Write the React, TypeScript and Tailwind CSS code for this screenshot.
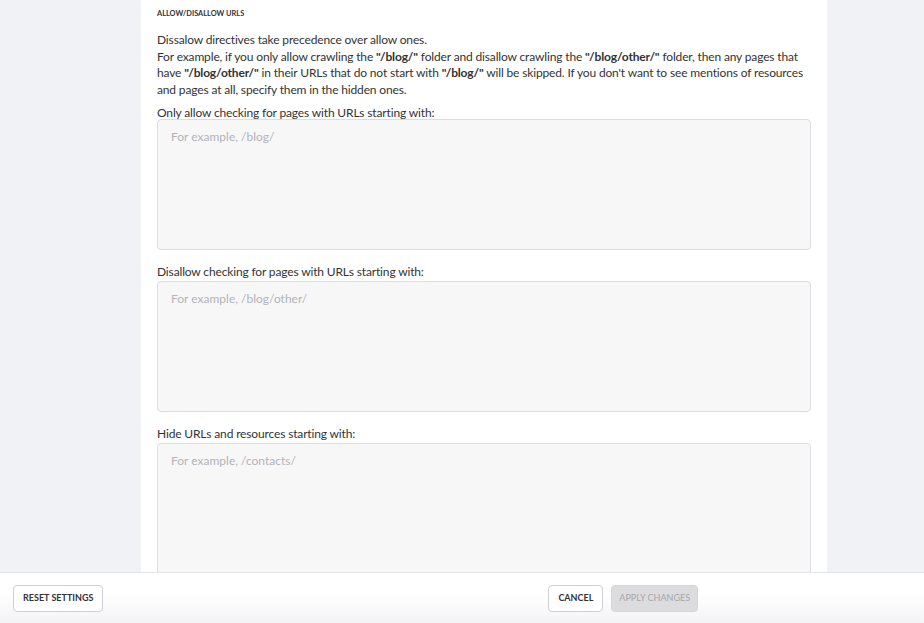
import React from "react";

function Field({ label, placeholder, mt, tmt }: { label: string; placeholder: string; mt: string; tmt: string }) {
  return (
    <div className={mt}>
      <div className="text-[12px] leading-[16px] tracking-[-0.15px] text-[#333]">{label}</div>
      <textarea
        placeholder={placeholder}
        className={`${tmt} block h-[131px] w-full resize-none rounded-[4px] border border-[#dcdde2] bg-[#f7f7f8] px-[13px] py-[9px] text-[12px] leading-[16px] text-[#333] placeholder:text-[#b3b3b8] outline-none`}
      />
    </div>
  );
}

export default function App() {
  return (
    <div
      className="relative h-[623px] w-[924px] overflow-hidden bg-[#f1f2f6]"
      style={{ fontFamily: "Lato, 'Open Sans', sans-serif" }}
    >
      <div className="ml-[141px] h-full w-[686px] bg-white px-[16px] pt-[7px]">
        <div className="text-[7.4px] font-bold uppercase leading-[14px] text-[#333]">
          Allow/Disallow URLs
        </div>
        <p className="mt-[11px] text-[12px] leading-[16.6px] tracking-[-0.15px] text-[#333]">
          Dissalow directives take precedence over allow ones.
          <br />
          For example, if you only allow crawling the <b>"/blog/"</b> folder and disallow crawling the{" "}
          <b>"/blog/other/"</b> folder, then any pages that have <b>"/blog/other/"</b> in their URLs that do not start
          with <b>"/blog/"</b> will be skipped. If you don't want to see mentions of resources and pages at all,
          specify them in the hidden ones.
        </p>
        <Field mt="mt-[7px]" tmt="mt-[-2px]" label="Only allow checking for pages with URLs starting with:" placeholder="For example, /blog/" />
        <Field mt="mt-[14px]" tmt="mt-[1px]" label="Disallow checking for pages with URLs starting with:" placeholder="For example, /blog/other/" />
        <Field mt="mt-[14px]" tmt="mt-[1px]" label="Hide URLs and resources starting with:" placeholder="For example, /contacts/" />
      </div>
      <div className="absolute bottom-0 left-0 right-0 flex h-[51px] items-center border-t border-[#e3e4e8] bg-[linear-gradient(to_bottom,#ffffff_40%,#f4f4f6)] px-[13px]">
        <button className="h-[27px] rounded-[4px] border border-[#cfd0d6] bg-white px-[9px] text-[9px] font-bold uppercase text-[#333]">
          Reset Settings
        </button>
        <div className="ml-[445px] flex gap-[8px]">
          <button className="h-[27px] rounded-[4px] border border-[#cfd0d6] bg-white px-[9px] text-[9px] font-bold uppercase text-[#333]">
            Cancel
          </button>
          <button className="h-[27px] rounded-[4px] border border-[#d6d6da] bg-[#dcdcdf] px-[7px] text-[9px] font-normal uppercase text-[#a6a6ab]">
            Apply Changes
          </button>
        </div>
      </div>
    </div>
  );
}
